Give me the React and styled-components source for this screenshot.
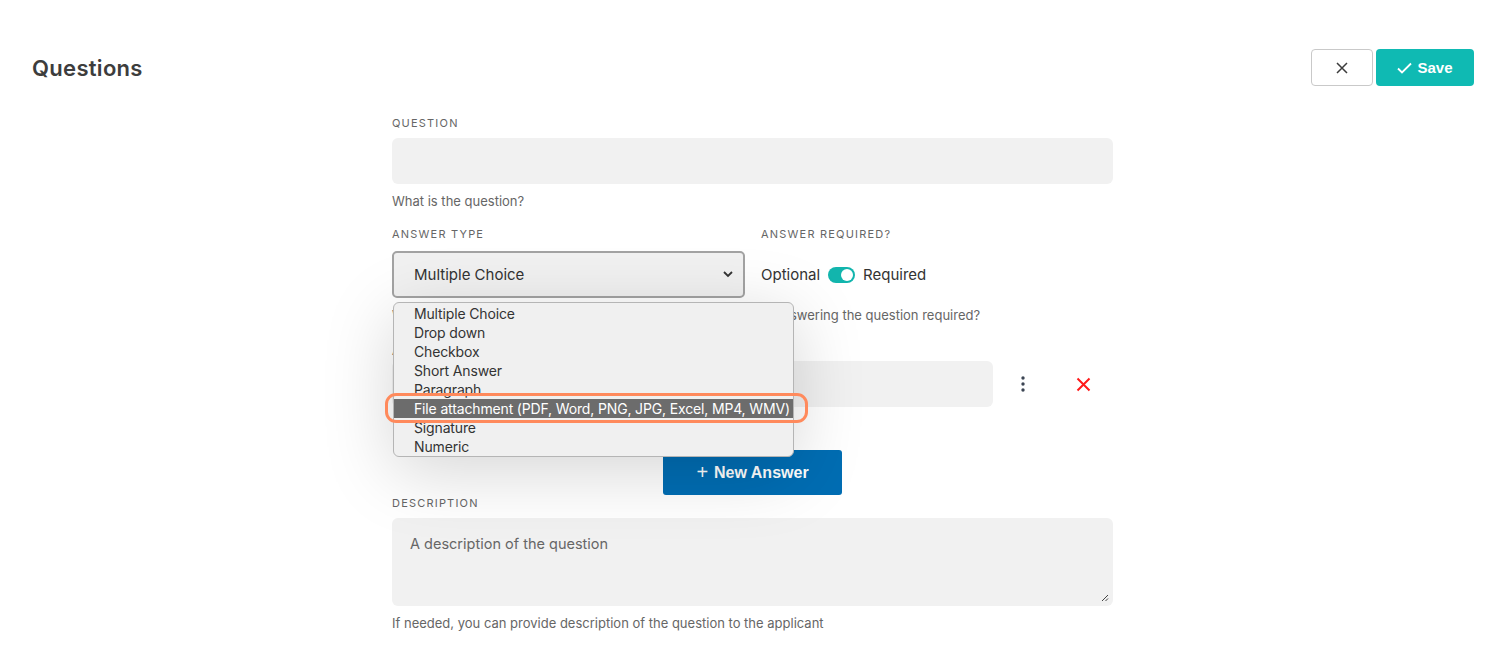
import React from 'react'
import styled, { createGlobalStyle } from 'styled-components'

const GlobalStyle = createGlobalStyle`
  body {
    margin: 0;
    background: #fff;
    font-family: Inter, "Noto Sans", sans-serif;
    color: #333;
  }
`

const Page = styled.div`
  width: 1503px;
  height: 652px;
  overflow: hidden;
  position: relative;
`

const Header = styled.div`
  display: flex;
  justify-content: space-between;
  align-items: center;
  padding: 49px 29px 0 32px;
  height: 37px;

  h1 {
    margin: 0;
    font-size: 22px;
    font-weight: 600;
    color: #3d3d3d;
    letter-spacing: 0.3px;
  }
`

const Actions = styled.div`
  display: flex;
  gap: 3px;
`

const CloseButton = styled.button`
  width: 62px;
  height: 37px;
  border: 1px solid #c9c9c9;
  background: #fff;
  border-radius: 4px;
  display: flex;
  align-items: center;
  justify-content: center;
  color: #3c3c3c;
  padding: 0;
`

const SaveButton = styled.button`
  width: 98px;
  height: 37px;
  border: none;
  background: #0fbab3;
  color: #fff;
  border-radius: 4px;
  font-family: "Liberation Sans", Arial, sans-serif;
  font-weight: 700;
  font-size: 15px;
  display: flex;
  align-items: center;
  justify-content: center;
  gap: 5px;
`

const Form = styled.div`
  width: 721px;
  margin: 30px 0 0 392px;
  position: relative;
`

const Label = styled.div`
  font-size: 11px;
  letter-spacing: 1.2px;
  color: #666;
  text-transform: uppercase;
  height: 15px;
  line-height: 15px;
  margin-top: ${p => p.$top || 0}px;
  margin-bottom: ${p => p.$gap || 7}px;
`

const Input = styled.div`
  height: 46px;
  background: #f1f1f1;
  border-radius: 6px;
  width: ${p => p.$width || '100%'};
`

const Hint = styled.div`
  font-size: 13px;
  line-height: 16px;
  color: #666;
  margin-top: ${p => p.$top || 10}px;
  height: 16px;
`

const Row = styled.div`
  display: flex;
  gap: 16px;
  margin-top: ${p => p.$top || 0}px;
`

const Col = styled.div`
  width: ${p => p.$width}px;
`

const Select = styled.div`
  height: 43px;
  border: 2px solid #a3a3a3;
  border-radius: 5px;
  background: #f1f1f1;
  display: flex;
  align-items: center;
  justify-content: space-between;
  padding: 0 10px 0 20px;
  font-size: 15px;
  color: #333;
`

const ToggleRow = styled.div`
  display: flex;
  align-items: center;
  gap: 8px;
  height: 47px;
  font-size: 15px;
  color: #333;
`

const Switch = styled.span`
  width: 27px;
  height: 16px;
  border-radius: 8px;
  background: #12b5ad;
  display: inline-flex;
  align-items: center;
  justify-content: flex-end;
  padding: 0 2px;
  box-sizing: border-box;

  &::after {
    content: '';
    width: 12px;
    height: 12px;
    border-radius: 50%;
    background: #fff;
  }
`

const AnswerRow = styled.div`
  display: flex;
  align-items: center;
`

const IconButton = styled.span`
  width: ${p => p.$w}px;
  display: flex;
  justify-content: center;
  align-items: center;
`

const NewAnswer = styled.button`
  display: flex;
  align-items: center;
  justify-content: center;
  gap: 6px;
  margin: 43px auto 0;
  width: 179px;
  height: 45px;
  border: none;
  border-radius: 3px;
  background: #006db3;
  color: #fff;
  font-family: "Liberation Sans", Arial, sans-serif;
  font-size: 16px;
  font-weight: 700;
`

const TextArea = styled.div`
  position: relative;
  height: 88px;
  background: #f1f1f1;
  border-radius: 6px;
  padding: 17px 18px;
  box-sizing: border-box;
  font-size: 14.5px;
  color: #666;
`

const Grip = styled.svg`
  position: absolute;
  right: 4px;
  bottom: 4px;
`

const Dropdown = styled.div`
  position: absolute;
  left: 1px;
  top: 186px;
  width: 399px;
  height: 152px;
  border: 1px solid #b5b5b5;
  border-radius: 6px;
  background: #f0f0f0;
  box-shadow: 0 14px 70px rgba(0, 0, 0, 0.17);
  padding-top: 1px;
  box-sizing: content-box;
`

const Option = styled.div`
  height: 19px;
  line-height: 19px;
  font-size: 14px;
  letter-spacing: -0.15px;
  padding-left: 20px;
  color: ${p => (p.$active ? '#fff' : '#333')};
  background: ${p => (p.$active ? '#6c6c6c' : 'transparent')};
  white-space: nowrap;
`

const Ring = styled.div`
  position: absolute;
  left: -7px;
  top: 277px;
  width: 417px;
  height: 24px;
  border: 3px solid #ff8a5c;
  border-radius: 11px;
`

const options = [
  'Multiple Choice',
  'Drop down',
  'Checkbox',
  'Short Answer',
  'Paragraph',
  'File attachment (PDF, Word, PNG, JPG, Excel, MP4, WMV)',
  'Signature',
  'Numeric',
]

export default function App() {
  return (
    <Page>
      <GlobalStyle />
      <Header>
        <h1>Questions</h1>
        <Actions>
          <CloseButton>
            <svg width="12" height="12" viewBox="0 0 12 12">
              <path d="M1 1l10 10M11 1L1 11" stroke="#3c3c3c" strokeWidth="1.5" />
            </svg>
          </CloseButton>
          <SaveButton>
            <svg width="15" height="12" viewBox="0 0 15 12">
              <path d="M1 6.5l4 4L14 1.5" stroke="#fff" strokeWidth="1.8" fill="none" />
            </svg>
            Save
          </SaveButton>
        </Actions>
      </Header>

      <Form>
        <Label>Question</Label>
        <Input />
        <Hint $top={9}>What is the question?</Hint>

        <Row $top={18}>
          <Col $width={353}>
            <Label $gap={9}>Answer type</Label>
            <Select>
              Multiple Choice
              <svg width="10" height="7" viewBox="0 0 10 7">
                <path d="M1 1l4 4 4-4" stroke="#333" strokeWidth="1.8" fill="none" />
              </svg>
            </Select>
            <Hint $top={9}>What type of answer is expected?</Hint>
          </Col>
          <Col $width={352}>
            <Label $gap={9}>Answer required?</Label>
            <ToggleRow>
              Optional <Switch /> Required
            </ToggleRow>
            <Hint $top={9}>Is answering the question required?</Hint>
          </Col>
        </Row>

        <Label $top={21} $gap={2}>Answers</Label>
        <AnswerRow>
          <Input $width="601px" />
          <IconButton $w={60}>
            <svg width="4" height="16" viewBox="0 0 4 16">
              <circle cx="2" cy="2" r="1.7" fill="#3c4553" />
              <circle cx="2" cy="8" r="1.7" fill="#3c4553" />
              <circle cx="2" cy="14" r="1.7" fill="#3c4553" />
            </svg>
          </IconButton>
          <IconButton $w={60}>
            <svg width="15" height="15" viewBox="0 0 15 15">
              <path d="M1.5 1.5l12 12M13.5 1.5l-12 12" stroke="#ff1a1a" strokeWidth="2" />
            </svg>
          </IconButton>
        </AnswerRow>

        <NewAnswer>
          <span style={{ fontSize: 20, fontWeight: 400 }}>+</span> New Answer
        </NewAnswer>

        <Label $top={1} $gap={7}>Description</Label>
        <TextArea>
          A description of the question
          <Grip width="9" height="9" viewBox="0 0 9 9">
            <path d="M8 2L2 8M8 5.5L5.5 8" stroke="#444" strokeWidth="1" />
          </Grip>
        </TextArea>
        <Hint $top={9}>If needed, you can provide description of the question to the applicant</Hint>

        <Dropdown>
          {options.map((o, i) => (
            <Option key={o} $active={i === 5}>{o}</Option>
          ))}
        </Dropdown>
        <Ring />
      </Form>
    </Page>
  )
}
